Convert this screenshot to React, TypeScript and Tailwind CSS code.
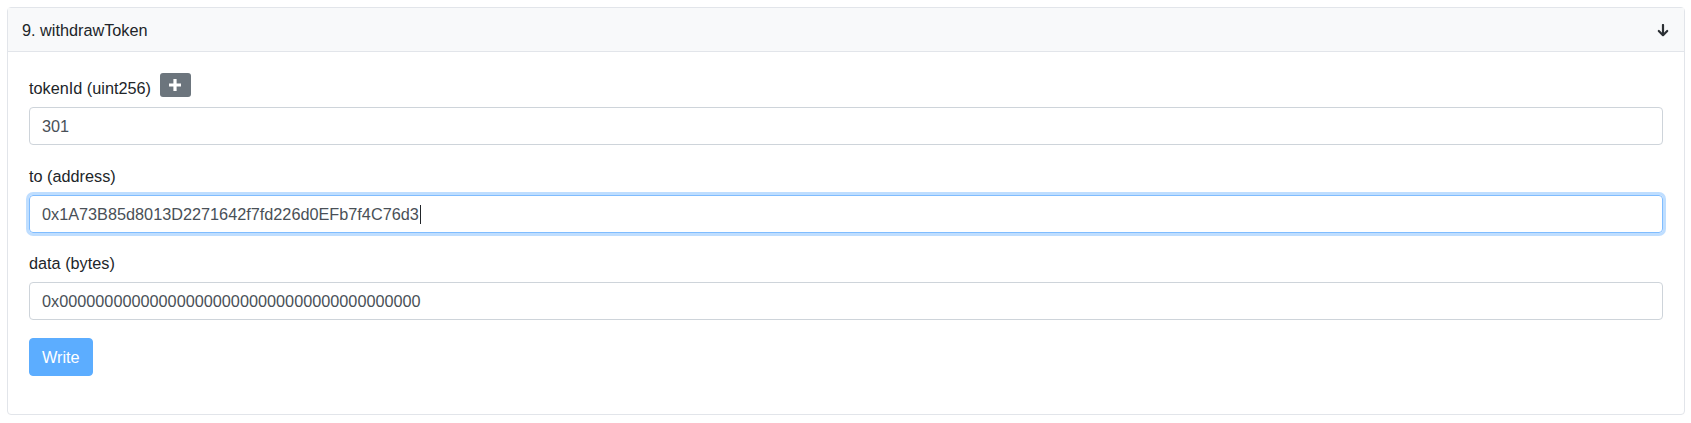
import React from "react";

function Field({ value, focused }: { value: string; focused?: boolean }) {
  return (
    <div
      className={
        "flex h-[38px] items-center rounded-[4px] border px-3 text-[16.25px] leading-6 text-[#495057] " +
        (focused
          ? "border-[#80bdff] shadow-[0_0_0_3px_rgba(0,123,255,0.25)]"
          : "border-[#ced4da]")
      }
    >
      <span>{value}</span>
      {focused && <span className="ml-[1px] inline-block h-[19px] w-px bg-[#212529]" />}
    </div>
  );
}

export default function App() {
  return (
    <div className="bg-white pl-[7px] pr-[6px] pt-[7px] pb-[9px]" style={{ fontFamily: '"Liberation Sans", Arial, sans-serif' }}>
      <div className="rounded-[4px] border border-[#e2e5ea] bg-white">
        <div className="flex items-center justify-between border-b border-[#e2e5ea] bg-[#f8f9fa] pl-[14px] pr-[15px] pt-[10px] pb-[9px] text-[16.25px] leading-6 text-[#212529]">
          <span>9. withdrawToken</span>
          <svg width="12" height="13" viewBox="0 0 12 13" fill="none">
            <path d="M6 1v10" stroke="#2b2f33" strokeWidth="2.2" strokeLinecap="round" />
            <path d="M1.8 7L6 11.2L10.2 7" stroke="#2b2f33" strokeWidth="2.2" strokeLinecap="round" strokeLinejoin="round" />
          </svg>
        </div>
        <div className="px-[21px] pt-[21px] pb-[38px] text-[16.25px] leading-6 text-[#212529]">
          <div className="mb-[7px] flex items-start">
            <span className="pt-[3px]">tokenId (uint256)</span>
            <span className="ml-[9px] flex h-[24px] w-[31px] items-center justify-center rounded-[3px] bg-[#6c757d]">
              <svg width="14" height="14" viewBox="0 0 14 14">
                <path d="M7 1v12M1 7h12" stroke="#ffffff" strokeWidth="3.2" />
              </svg>
            </span>
          </div>
          <Field value="301" />
          <div className="mt-[19px] mb-[7px]">to (address)</div>
          <Field value="0x1A73B85d8013D2271642f7fd226d0EFb7f4C76d3" focused />
          <div className="mt-[18px] mb-[7px]">data (bytes)</div>
          <Field value="0x0000000000000000000000000000000000000000" />
          <div className="mt-[18px]">
            <button className="h-[38px] rounded-[4px] border border-[#5cadff] bg-[#5cadff] px-3 text-[16.25px] leading-6 text-white">
              Write
            </button>
          </div>
        </div>
      </div>
    </div>
  );
}
